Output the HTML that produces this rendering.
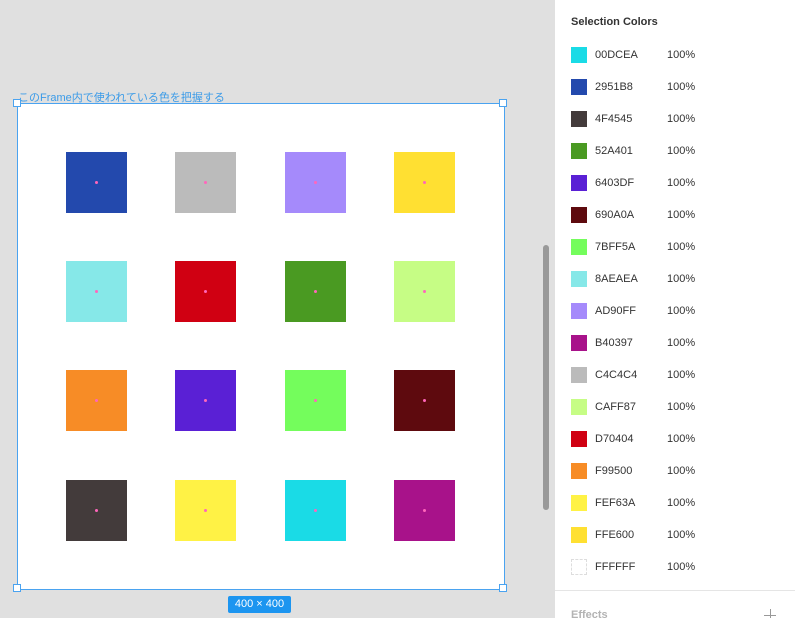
<!DOCTYPE html>
<html><head><meta charset="utf-8"><style>
html,body{margin:0;width:795px;height:618px;overflow:hidden}
body{background:#e0e0e0;font-family:"Liberation Sans","Noto Sans CJK JP",sans-serif;position:relative}
.a{position:absolute}
.sq{position:absolute;width:61px;height:61px}
.sq:after{content:"";position:absolute;left:29px;top:29px;width:3px;height:3px;background:#f6b;border-radius:50%}
.h{position:absolute;width:6px;height:6px;border:1px solid #4aa3f0;background:#fff}
.row{position:absolute;left:571px;height:16px;font-size:11px;color:#333}
.row i{position:absolute;left:0;top:0;width:16px;height:16px}
.row span{position:absolute;left:24px;top:2px}
.row b{position:absolute;left:96px;top:2px;font-weight:normal}
</style></head><body>
<div class="a" style="left:18px;top:89px;font-size:11px;color:#3b9be8">このFrame内で使われている色を把握する</div>
<div class="a" style="left:17px;top:103px;width:486px;height:485px;background:#fff;border:1px solid #4aa3f0"></div>
<div class="sq" style="left:66px;top:152px;background:#2349ad"></div>
<div class="sq" style="left:175px;top:152px;background:#bbbbbb"></div>
<div class="sq" style="left:285px;top:152px;background:#a58afb"></div>
<div class="sq" style="left:394px;top:152px;background:#ffe032"></div>
<div class="sq" style="left:66px;top:261px;background:#86e8e8"></div>
<div class="sq" style="left:175px;top:261px;background:#d00012"></div>
<div class="sq" style="left:285px;top:261px;background:#4a9a22"></div>
<div class="sq" style="left:394px;top:261px;background:#c6fd85"></div>
<div class="sq" style="left:66px;top:370px;background:#f78c26"></div>
<div class="sq" style="left:175px;top:370px;background:#5a20d5"></div>
<div class="sq" style="left:285px;top:370px;background:#74fd5c"></div>
<div class="sq" style="left:394px;top:370px;background:#5e0a0e"></div>
<div class="sq" style="left:66px;top:480px;background:#433b3b"></div>
<div class="sq" style="left:175px;top:480px;background:#fff245"></div>
<div class="sq" style="left:285px;top:480px;background:#1adbe6"></div>
<div class="sq" style="left:394px;top:480px;background:#a8128a"></div>
<div class="h" style="left:13px;top:99px"></div>
<div class="h" style="left:499px;top:99px"></div>
<div class="h" style="left:13px;top:584px"></div>
<div class="h" style="left:499px;top:584px"></div>
<div class="a" style="left:228px;top:596px;width:63px;height:17px;background:#1c95f0;border-radius:2px;color:#fff;font-size:11px;line-height:17px;text-align:center">400 × 400</div>
<div class="a" style="left:543px;top:245px;width:6px;height:265px;background:#999;border-radius:3px"></div>
<div class="a" style="left:555px;top:0;width:240px;height:618px;background:#fff"></div>
<div class="a" style="left:571px;top:16px;font-size:11px;font-weight:bold;color:#333">Selection Colors</div>
<div class="row" style="top:47px"><i style="background:#1adbe6"></i><span>00DCEA</span><b>100%</b></div>
<div class="row" style="top:79px"><i style="background:#2349ad"></i><span>2951B8</span><b>100%</b></div>
<div class="row" style="top:111px"><i style="background:#433b3b"></i><span>4F4545</span><b>100%</b></div>
<div class="row" style="top:143px"><i style="background:#4a9a22"></i><span>52A401</span><b>100%</b></div>
<div class="row" style="top:175px"><i style="background:#5a20d5"></i><span>6403DF</span><b>100%</b></div>
<div class="row" style="top:207px"><i style="background:#5e0a0e"></i><span>690A0A</span><b>100%</b></div>
<div class="row" style="top:239px"><i style="background:#74fd5c"></i><span>7BFF5A</span><b>100%</b></div>
<div class="row" style="top:271px"><i style="background:#86e8e8"></i><span>8AEAEA</span><b>100%</b></div>
<div class="row" style="top:303px"><i style="background:#a58afb"></i><span>AD90FF</span><b>100%</b></div>
<div class="row" style="top:335px"><i style="background:#a8128a"></i><span>B40397</span><b>100%</b></div>
<div class="row" style="top:367px"><i style="background:#bbbbbb"></i><span>C4C4C4</span><b>100%</b></div>
<div class="row" style="top:399px"><i style="background:#c6fd85"></i><span>CAFF87</span><b>100%</b></div>
<div class="row" style="top:431px"><i style="background:#d00012"></i><span>D70404</span><b>100%</b></div>
<div class="row" style="top:463px"><i style="background:#f78c26"></i><span>F99500</span><b>100%</b></div>
<div class="row" style="top:495px"><i style="background:#fff245"></i><span>FEF63A</span><b>100%</b></div>
<div class="row" style="top:527px"><i style="background:#ffe032"></i><span>FFE600</span><b>100%</b></div>
<div class="row" style="top:559px"><i style="border:1px dashed #ddd;width:14px;height:14px"></i><span>FFFFFF</span><b>100%</b></div>
<div class="a" style="left:555px;top:590px;width:240px;height:1px;background:#e5e5e5"></div>
<div class="a" style="left:571px;top:609px;font-size:11px;font-weight:bold;color:#b3b3b3">Effects</div>
<div class="a" style="left:764px;top:615px;width:12px;height:1px;background:#999"></div>
<div class="a" style="left:770px;top:609px;width:1px;height:12px;background:#999"></div>
</body></html>
